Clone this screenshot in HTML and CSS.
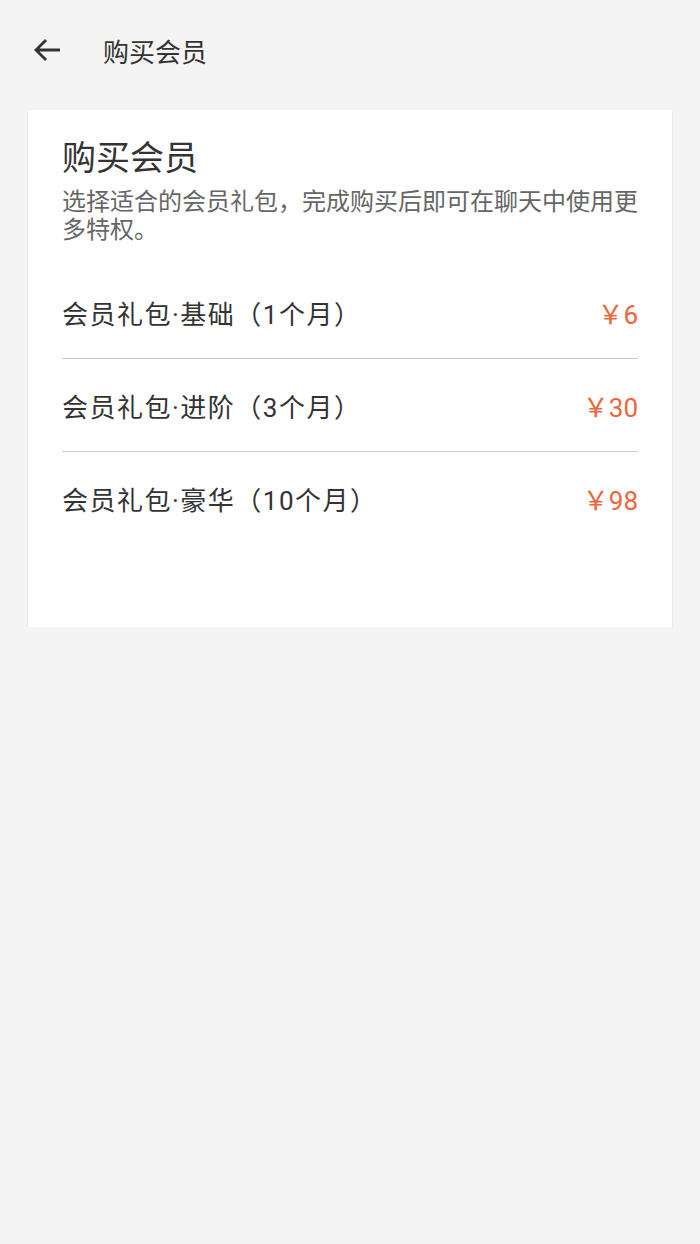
FILE: index.html
```html
<!DOCTYPE html>
<html lang="zh-CN">
<head>
    <meta charset="UTF-8">
    <meta name="viewport" content="width=device-width, initial-scale=1.0">
    <title>购买会员</title>
    <link rel="stylesheet" href="styles.css">
</head>
<body>
    <div class="header">
        <svg class="back" viewBox="0 0 28 24" width="28" height="24">
            <path d="M27 12H3M13 2L3 12l10 10" fill="none" stroke="#333" stroke-width="2.8"/>
        </svg>
        <span class="header-title">购买会员</span>
    </div>

    <div class="card">
        <h1>购买会员</h1>
        <p class="desc">选择适合的会员礼包，完成购买后即可在聊天中使用更多特权。</p>
        <ul class="plan-list">
            <li>
                <span class="plan-name">会员礼包·基础（1个月）</span>
                <span class="price">￥6</span>
            </li>
            <li>
                <span class="plan-name">会员礼包·进阶（3个月）</span>
                <span class="price">￥30</span>
            </li>
            <li>
                <span class="plan-name">会员礼包·豪华（10个月）</span>
                <span class="price">￥98</span>
            </li>
        </ul>
    </div>
</body>
</html>
```

FILE: styles.css
```css
body {
    font-family: Roboto, "Noto Sans CJK SC", sans-serif;
    background-color: #f4f4f4;
    color: #333;
    margin: 0;
    padding: 0;
}

.header {
    height: 100px;
    display: flex;
    align-items: center;
    padding-left: 33px;
}

.back {
    display: block;
    margin-right: 42px;
}

.header-title {
    font-size: 26px;
    color: #333;
}

.card {
    margin: 10px 28px 0;
    background: white;
    padding: 27px 34px 83px;
    box-shadow: 0 2px 2px rgba(0, 0, 0, 0.12);
}

.card h1 {
    font-size: 34px;
    font-weight: normal;
    line-height: 42px;
    margin: 0 0 9px;
    color: #333;
}

.desc {
    font-size: 24px;
    line-height: 28px;
    color: #666;
    margin: 0 0 22px;
}

.plan-list {
    list-style-type: none;
    margin: 0;
    padding: 0;
}

.plan-list li {
    height: 92px;
    display: flex;
    align-items: center;
    justify-content: space-between;
    border-bottom: 1px solid #cccccc;
}

.plan-list li:last-child {
    border-bottom: none;
}

.plan-name {
    font-size: 26px;
    letter-spacing: 1.5px;
    color: #333;
}

.price {
    font-size: 26px;
    color: #f0643c;
}
```
